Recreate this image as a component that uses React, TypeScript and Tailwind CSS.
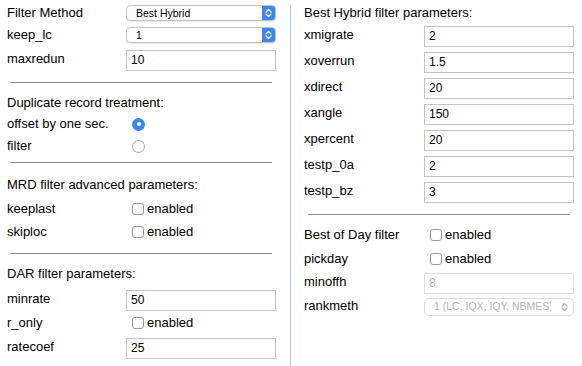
import React from "react";

const font = { fontFamily: '"Liberation Sans", Arial, sans-serif' };

// Small form controls drawn to look like the macOS ones in the reference
const TextBox = ({ value, disabled }: { value: string; disabled?: boolean }) => (
  <div
    className={`w-[150px] h-[21px] border bg-white flex items-center pl-[4px] text-[12px] ${
      disabled ? "border-[#dedede] text-[#b4b4b4]" : "border-[#c4c4c4] text-black"
    }`}
  >
    {value}
  </div>
);

const Chevrons = ({ color }: { color: string }) => (
  <svg width="7" height="10" viewBox="0 0 7 10" fill="none">
    <path d="M1 4 L3.5 1.5 L6 4" stroke={color} strokeWidth="1.2" strokeLinecap="round" strokeLinejoin="round" />
    <path d="M1 6 L3.5 8.5 L6 6" stroke={color} strokeWidth="1.2" strokeLinecap="round" strokeLinejoin="round" />
  </svg>
);

const Select = ({ value }: { value: string }) => (
  <div className="w-[150px] h-[16px] flex rounded-[4px] border border-[#c0c0c0] bg-white overflow-hidden shadow-[0_1px_1px_rgba(0,0,0,0.08)]">
    <div className="flex-1 pl-[9px] text-[10.5px] leading-[14px] text-black">{value}</div>
    <div className="w-[13px] h-full bg-[#3a86f6] flex items-center justify-center">
      <Chevrons color="#ffffff" />
    </div>
  </div>
);

const DisabledSelect = ({ value }: { value: string }) => (
  <div className="w-[150px] h-[18px] flex items-center rounded-[5px] border border-[#dcdcdc] bg-white overflow-hidden">
    <div className="flex-1 min-w-0 pl-[9px] text-[10.5px] text-[#b4b4b4] whitespace-nowrap overflow-hidden">
      {value}
    </div>
    <div className="w-[22px] shrink-0 flex items-center justify-end pr-[5px]">
      <Chevrons color="#b0b0b0" />
    </div>
  </div>
);

const Check = () => (
  <div className="flex items-center ml-[6px] text-[13px]">
    <span className="w-[12px] h-[12px] rounded-[3px] border border-[#9a9a9a] bg-white" />
    <span className="ml-[3px]">enabled</span>
  </div>
);

const Radio = ({ on }: { on?: boolean }) =>
  on ? (
    <span className="ml-[6px] w-[13px] h-[13px] rounded-full bg-[#3b87f7] flex items-center justify-center">
      <span className="w-[4px] h-[4px] rounded-full bg-white" />
    </span>
  ) : (
    <span className="ml-[6px] w-[13px] h-[13px] rounded-full border border-[#a8a8a8] bg-white" />
  );

const Row = ({
  label,
  h,
  w,
  lift,
  children,
}: {
  label: string;
  h: string;
  w: string;
  lift?: boolean;
  children?: React.ReactNode;
}) => (
  <div className={`flex items-center ${h}`}>
    <div className={`${w} shrink-0 ${lift ? "pb-[3px]" : ""}`}>{label}</div>
    {children}
  </div>
);

const Rule = ({ className }: { className: string }) => (
  <div className={`h-px bg-[#8c8c8c] ${className}`} />
);

export default function App() {
  const lw = "w-[119px]";
  const rw = "w-[120px]";

  return (
    <div className="w-[582px] h-[366px] bg-white flex text-[13px] text-black overflow-hidden" style={font}>
      {/* left column */}
      <div className="w-[290px] pl-[7px] flex flex-col">
        <Row label="Filter Method" h="h-[26px]" w={lw}>
          <Select value="Best Hybrid" />
        </Row>
        <Row label="keep_lc" h="h-[18px]" w={lw}>
          <Select value="1" />
        </Row>
        <Row label="maxredun" h="h-[32px]" w={lw} lift>
          <TextBox value="10" />
        </Row>
        <Rule className="mt-[6px] ml-[3px] w-[262px]" />

        <div className="h-[20px] mt-[10px] flex items-center">Duplicate record treatment:</div>
        <Row label="offset by one sec." h="h-[22px]" w={lw}>
          <Radio on />
        </Row>
        <Row label="filter" h="h-[22px]" w={lw}>
          <Radio />
        </Row>
        <Rule className="mt-[5px] ml-[3px] w-[262px]" />

        <div className="h-[20px] mt-[12px] flex items-center">MRD filter advanced parameters:</div>
        <Row label="keeplast" h="h-[28px]" w={lw}>
          <Check />
        </Row>
        <Row label="skiploc" h="h-[18px]" w={lw}>
          <Check />
        </Row>
        <Rule className="mt-[12px] ml-[3px] w-[262px]" />

        <div className="h-[20px] mt-[10px] flex items-center">DAR filter parameters:</div>
        <Row label="minrate" h="h-[32px]" w={lw} lift>
          <TextBox value="50" />
        </Row>
        <Row label="r_only" h="h-[14px]" w={lw}>
          <Check />
        </Row>
        <Row label="ratecoef" h="h-[36px]" w={lw} lift>
          <TextBox value="25" />
        </Row>
      </div>

      {/* right column */}
      <div className="flex-1 mt-[5px] border-l border-[#b9c6d5] pl-[13px] flex flex-col">
        <div className="h-[18px] flex items-end pb-[1px]">Best Hybrid filter parameters:</div>
        {[
          ["xmigrate", "2"],
          ["xoverrun", "1.5"],
          ["xdirect", "20"],
          ["xangle", "150"],
          ["xpercent", "20"],
          ["testp_0a", "2"],
          ["testp_bz", "3"],
        ].map(([name, val]) => (
          <Row key={name} label={name} h="h-[26px]" w={rw} lift>
            <TextBox value={val} />
          </Row>
        ))}
        <Rule className="mt-[9px] ml-[4px] w-[262px]" />

        <Row label="Best of Day filter" h="h-[22px] mt-[9px]" w={rw}>
          <Check />
        </Row>
        <Row label="pickday" h="h-[26px]" w={rw}>
          <Check />
        </Row>
        <Row label="minoffh" h="h-[22px]" w={rw} lift>
          <TextBox value="8" disabled />
        </Row>
        <Row label="rankmeth" h="h-[26px]" w={rw} lift>
          <DisabledSelect value="1 (LC, IQX, IQY, NBMES)" />
        </Row>
      </div>
    </div>
  );
}
